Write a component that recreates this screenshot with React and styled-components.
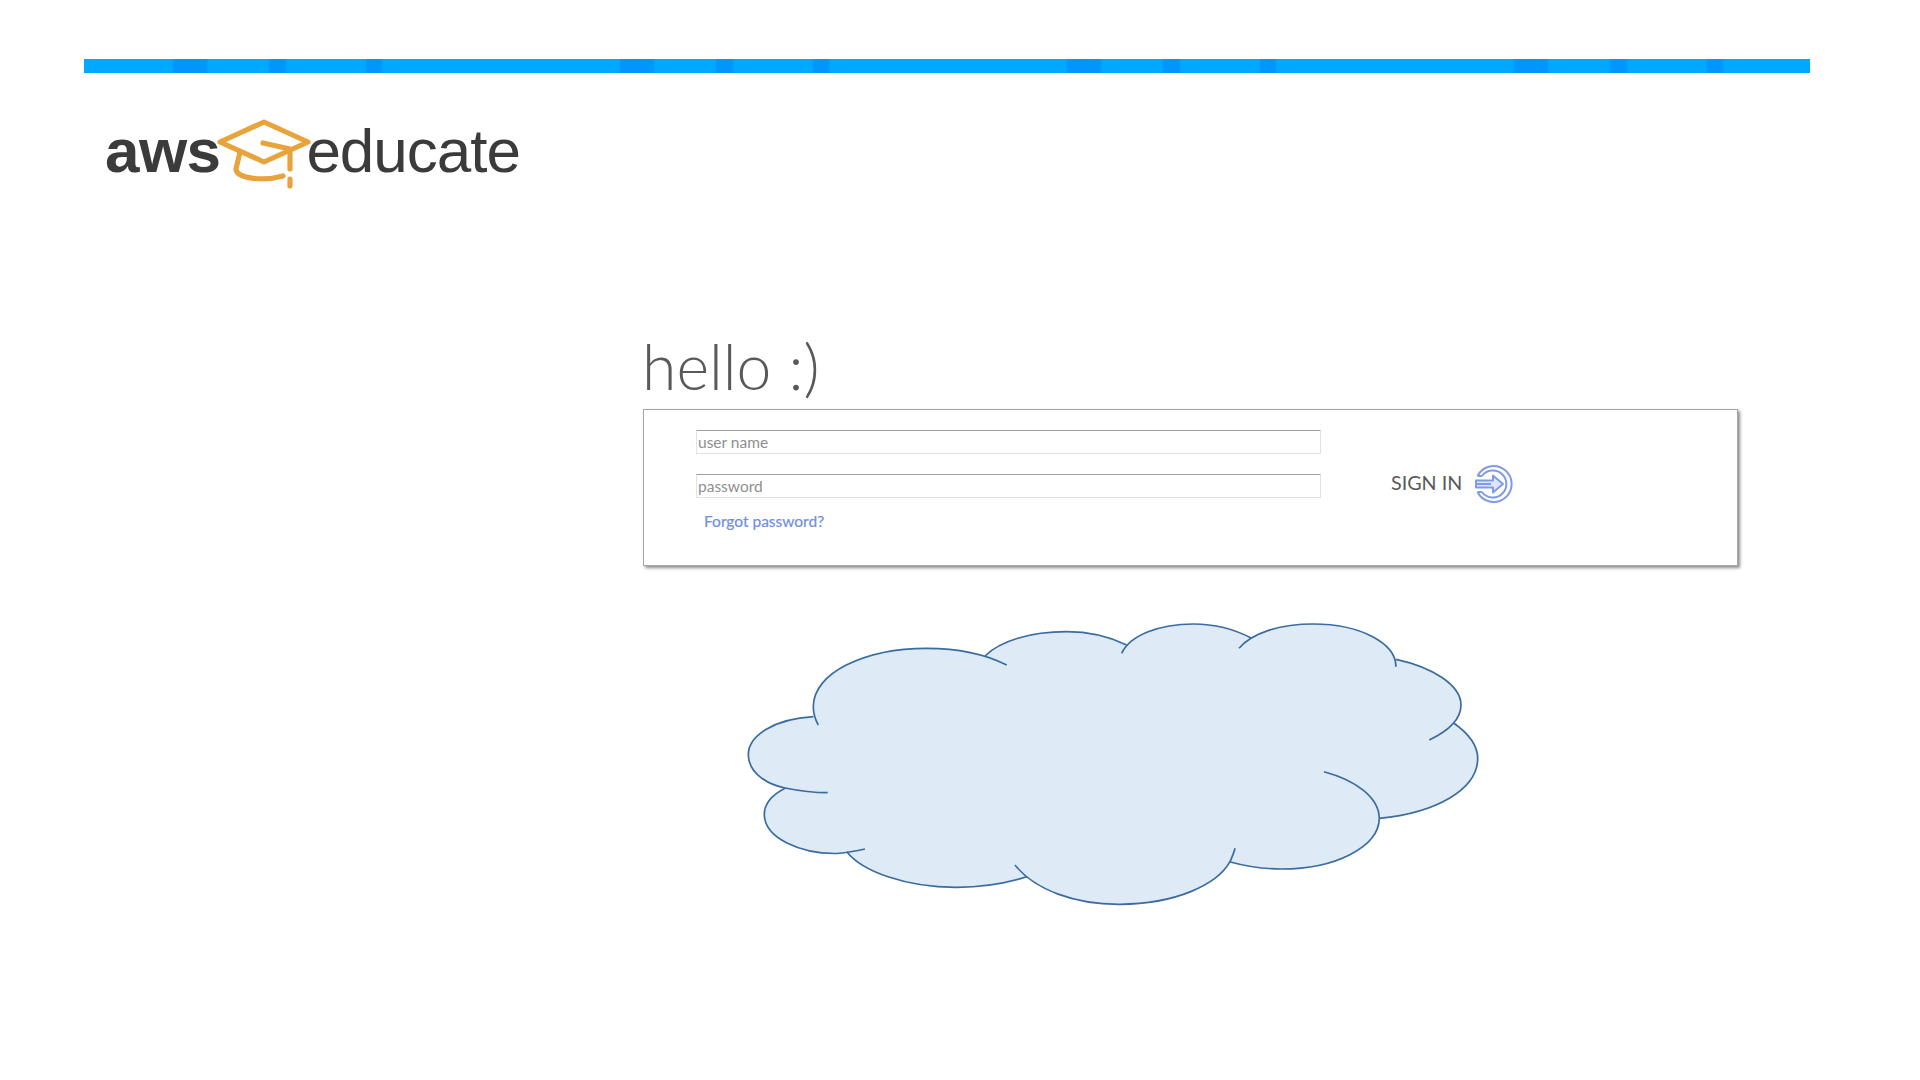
import React from "react"
import styled, { createGlobalStyle } from "styled-components"

const cloudArcs = [
  "M813.3 716.7 C775 719 748 735 748.3 755 C749 775 770 785 785 788 C800 791 815 792.7 827.7 792.7",
  "M785 788.3 C772 795 764 804 764.3 815 C765 838 800 854 836.7 853.5 C846 853 856 851 865 849",
  "M846.7 851.7 C862 871 905 887.5 956.7 887.3 C982 887 1007 883 1026.7 876.7",
  "M1015 865 C1035 890 1075 904.5 1120 904.3 C1175 904 1217 885 1230 861.7 C1232 857 1234 853 1235 848.3",
  "M1229.3 861.7 C1245 866 1262 869 1281.7 869 C1335 869 1379 847 1379.3 818.3 C1379 797 1355 780 1324 771.7",
  "M1379.3 818.3 C1435 813 1477.7 790 1477.7 758.3 C1477.7 745 1468 733 1453.3 722.7",
  "M1396 659.3 C1432 667 1461 685 1461 705 C1461 720 1446 732 1429.3 740",
  "M1396 666.7 C1396 643 1360 624 1313.3 624 C1280 624 1252 633 1239 648.3",
  "M1251.7 638.3 C1236 630 1216 624 1193.3 624 C1160 624 1130 635 1121.7 653.3",
  "M1126.7 645 C1110 637 1090 631.7 1066.7 631.7 C1030 631.7 1000 641 985 656",
  "M1006.7 665 C985 654 957 648.3 926.7 648.3 C865 648.3 813 673 813.3 706.7 C813.3 713 815 719 818.3 725",
]

const Cloud = () => (
  <CloudSvg viewBox="740 615 750 300">
    <polygon
      points="813,717 785,788 847,852 1027,877 1230,862 1379,818 1453,723 1396,660 1252,638 1127,645 985,656"
      fill="#deeaf6"
      stroke="#deeaf6"
    />
    {cloudArcs.map(d => <path key={d} d={d} fill="#deeaf6" />)}
    {cloudArcs.map(d => (
      <path key={d} d={d} fill="none" stroke="#3a6c9f" strokeWidth="1.7" />
    ))}
  </CloudSvg>
)

const Cap = () => (
  <CapSvg viewBox="0 0 96 70">
    <g fill="none" stroke="#e8a33d" strokeWidth="5.2" strokeLinecap="round" strokeLinejoin="round">
      <path d="M47 3 L91 23 L47 43 L3 23 Z" />
      <path d="M46 24 L73 30 L73 50" />
      <path d="M23 33 L19 50 C19 59 45 63 66 57" />
      <path d="M73 60 L73 67" />
    </g>
  </CapSvg>
)

const SignInIcon = () => (
  <IconSvg viewBox="0 0 40 40">
    <g fill="none" stroke="#7f9be6" strokeWidth="2" strokeLinejoin="round">
      <path d="M3.5 12 A18 18 0 1 1 3.5 28" />
      <path d="M8 12 A13.5 13.5 0 1 1 8 28" />
      <path d="M3.5 12 H8 M3.5 28 H8" />
      <path d="M2 16.5 H19 V11.5 L29 20 L19 28.5 V23.5 H2 Z" fill="#dfe6fa" />
      <path d="M2 20 H17" />
    </g>
  </IconSvg>
)

const App = () => (
  <Page>
    <GlobalStyle />
    <TopBar />
    <Logo>
      <LogoBold>aws</LogoBold>
      <Cap />
      <LogoLight>educate</LogoLight>
    </Logo>
    <Main>
      <Hello>hello :)</Hello>
      <Panel>
        <Fields>
          <Field placeholder="user name" />
          <Field placeholder="password" />
          <Forgot href="#">Forgot password?</Forgot>
        </Fields>
        <SignIn>
          SIGN IN
          <SignInIcon />
        </SignIn>
      </Panel>
    </Main>
    <Cloud />
  </Page>
)

export default App

const GlobalStyle = createGlobalStyle`
  body {
    margin: 0;
    background: #fff;
    font-family: "Lato", "Liberation Sans", sans-serif;
  }
`

const Page = styled.div`
  width: 1920px;
  height: 1080px;
  padding-top: 59px;
  box-sizing: border-box;
  overflow: hidden;
`

const TopBar = styled.div`
  width: 1726px;
  height: 14px;
  margin-left: 84px;
  background-color: #00a8ff;
  background-image: repeating-linear-gradient(
    90deg,
    transparent 0 88px,
    #0096fb 90px 122px,
    transparent 124px 184px,
    #0096fb 186px 201px,
    transparent 203px 281px,
    #0096fb 283px 297px,
    transparent 299px 447px
  );
`

const Logo = styled.div`
  display: flex;
  align-items: flex-start;
  height: 88px;
  margin: 43px 0 0 105px;
  color: #3b3b3b;
  font-family: "Liberation Sans", Arial, sans-serif;
  font-size: 62px;
  line-height: 70px;
`

const LogoBold = styled.span`
  font-weight: 700;
  letter-spacing: -0.6px;
`

const LogoLight = styled.span`
  margin-left: -7px;
  letter-spacing: -1px;
`

const CapSvg = styled.svg`
  width: 96px;
  height: 70px;
  margin: 3px 0 0 -3px;
  flex: none;
`

const Main = styled.main`
  width: 1096px;
  margin: 128px 0 0 642px;
`

const Hello = styled.h1`
  margin: 0;
  height: 77px;
  color: #595959;
  font-size: 62.5px;
  font-weight: 300;
  line-height: 68px;
`

const Panel = styled.section`
  display: flex;
  align-items: flex-start;
  height: 157px;
  box-sizing: border-box;
  margin-left: 1px;
  padding: 20px 0 0 52px;
  background: #fff;
  border: 1px solid #a6a6a6;
  box-shadow: 2px 2px 3px #8c8c8c;
`

const Fields = styled.div`
  display: flex;
  flex-direction: column;
  gap: 20px;
  width: 625px;
`

const Field = styled.input`
  height: 24px;
  box-sizing: border-box;
  padding: 0 1px;
  border: 1px solid #e2e2e2;
  border-top-color: #a0a0a0;
  border-radius: 1px;
  outline: none;
  font-family: inherit;
  font-size: 15.5px;

  &::placeholder {
    color: #8f8f8f;
    opacity: 1;
  }
`

const Forgot = styled.a`
  margin: -7px 0 0 8px;
  color: #6f8ee0;
  font-size: 15.5px;
  line-height: 20px;
  text-decoration: none;
  -webkit-text-stroke: 0.2px #6f8ee0;
`

const SignIn = styled.div`
  display: flex;
  align-items: center;
  gap: 12px;
  margin: 30px 0 0 70px;
  color: #595959;
  font-size: 19.7px;
`

const IconSvg = styled.svg`
  width: 40px;
  height: 40px;
  flex: none;
  margin-top: 4px;
`

const CloudSvg = styled.svg`
  display: block;
  width: 750px;
  height: 300px;
  margin: 49px 0 0 740px;
`
